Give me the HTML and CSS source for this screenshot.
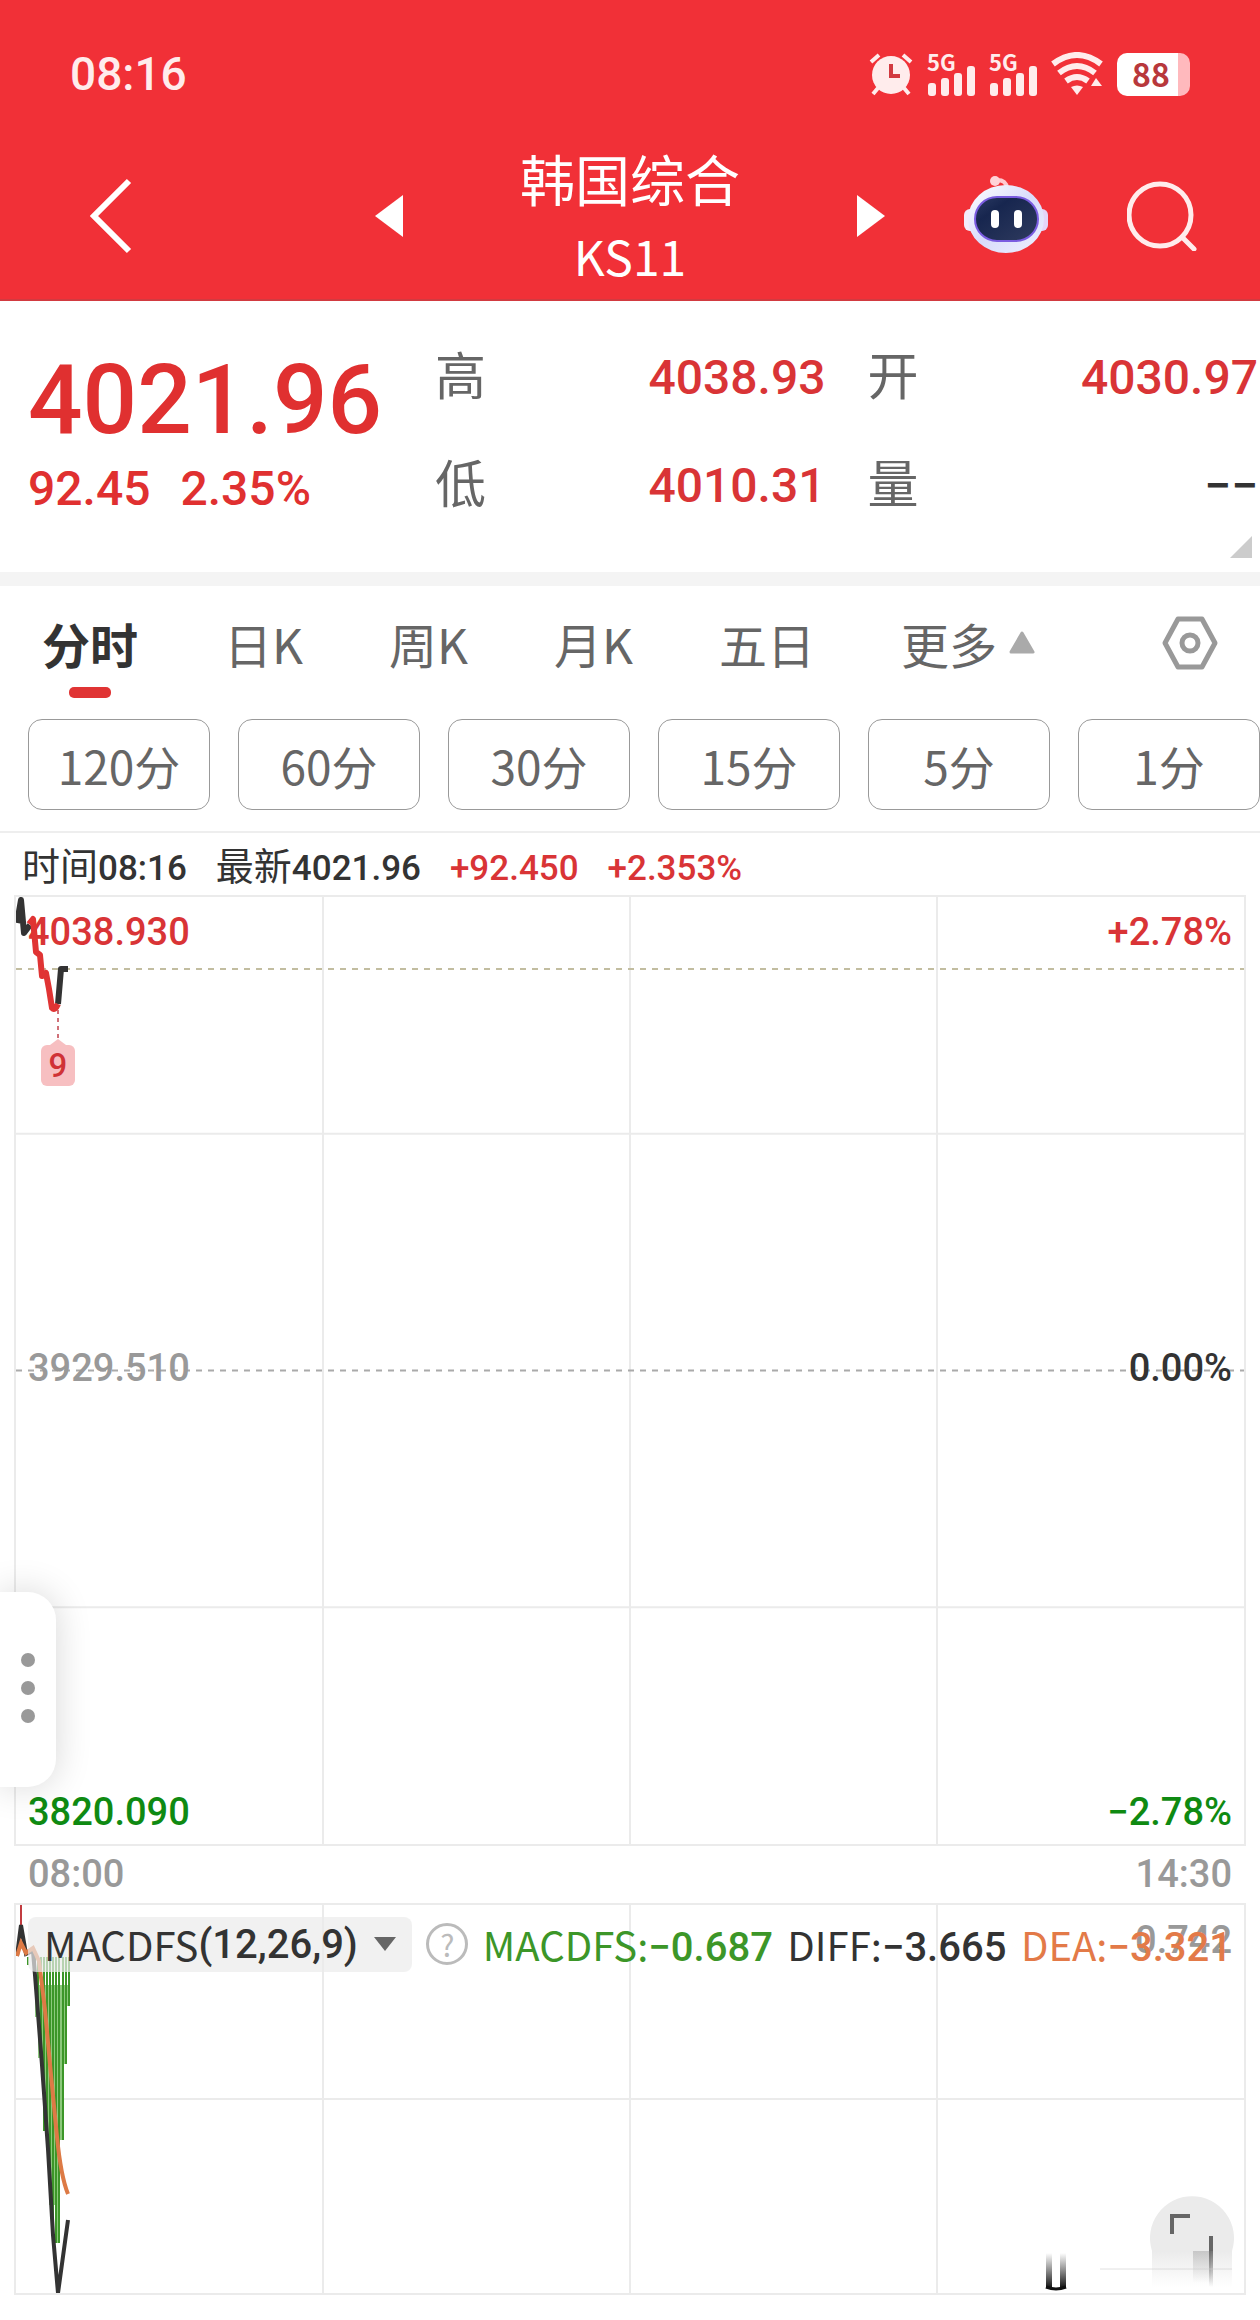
FILE: index.html
```
<!DOCTYPE html>
<html lang="zh-CN">
<head>
  <meta charset="UTF-8">
  <meta name="viewport" content="width=device-width, initial-scale=1.0">
  <title>韩国综合 KS11</title>
  <link rel="stylesheet" href="styles.css">
</head>
<body>

  <header class="top">
    <div class="status-bar">
      <span class="clock">08:16</span>
      <div class="status-icons">
        <svg class="alarm" width="44" height="44" viewBox="0 0 44 44">
          <circle cx="22" cy="23" r="19" fill="#ffecec"/>
          <path d="M2 10L10 3M42 10L34 3M9 36L4 42M35 36L40 42" stroke="#ffecec" stroke-width="4" fill="none"/>
          <path d="M22 12V24H31" stroke="#d23a40" stroke-width="4" fill="none"/>
        </svg>
        <div class="signal">
          <span>5G</span>
          <svg width="48" height="30" viewBox="0 0 48 30" fill="#ffecec">
            <rect x="1" y="17" width="8" height="13" rx="3"/>
            <rect x="14" y="12" width="8" height="18" rx="3"/>
            <rect x="27" y="7" width="8" height="23" rx="3"/>
            <rect x="40" y="0" width="8" height="30" rx="3"/>
          </svg>
        </div>
        <div class="signal">
          <span>5G</span>
          <svg width="48" height="30" viewBox="0 0 48 30" fill="#ffecec">
            <rect x="1" y="17" width="8" height="13" rx="3"/>
            <rect x="14" y="12" width="8" height="18" rx="3"/>
            <rect x="27" y="7" width="8" height="23" rx="3"/>
            <rect x="40" y="0" width="8" height="30" rx="3"/>
          </svg>
        </div>
        <svg class="wifi" width="52" height="44" viewBox="0 0 52 44">
          <g fill="none" stroke="#ffecec" stroke-width="6">
            <path d="M2 12Q26 -6 50 12"/>
            <path d="M8 21Q26 7 44 21"/>
            <path d="M15 29Q26 21 37 29"/>
          </g>
          <path d="M20 35Q26 32 32 35L26 43ZM40 34L45 26L51 34Z" fill="#ffecec"/>
        </svg>
        <span class="battery">88</span>
      </div>
    </div>

    <nav class="title-bar">
      <div class="nav-side nav-left">
        <button aria-label="返回">
          <svg width="42" height="76" viewBox="0 0 42 76"><path d="M39 3L4 38L39 73" fill="none" stroke="#fff" stroke-width="6"/></svg>
        </button>
        <button aria-label="上一个">
          <svg width="28" height="42" viewBox="0 0 28 42"><path d="M28 0V42L0 21Z" fill="#fff"/></svg>
        </button>
      </div>
      <div class="title">
        <h1>韩国综合</h1>
        <p>KS11</p>
      </div>
      <div class="nav-side nav-right">
        <button aria-label="下一个">
          <svg width="28" height="42" viewBox="0 0 28 42"><path d="M0 0V42L28 21Z" fill="#fff"/></svg>
        </button>
        <button aria-label="智能助手">
          <svg width="84" height="80" viewBox="0 0 84 80">
            <defs>
              <linearGradient id="shell" x1="0" y1="0" x2="1" y2="1">
                <stop offset="0" stop-color="#ffffff"/>
                <stop offset="0.5" stop-color="#d9dcfb"/>
                <stop offset="1" stop-color="#eef0ff"/>
              </linearGradient>
              <linearGradient id="visor" x1="0" y1="0" x2="1" y2="1">
                <stop offset="0" stop-color="#2b3a63"/>
                <stop offset="0.3" stop-color="#17264f"/>
                <stop offset="1" stop-color="#2f3b5e"/>
              </linearGradient>
            </defs>
            <path d="M31 4Q42 3 43 12" fill="none" stroke="#ffc9d0" stroke-width="4"/>
            <circle cx="31" cy="5" r="5" fill="#ffd3d8"/>
            <rect x="0" y="33" width="14" height="22" rx="6" fill="#f3ecfb"/>
            <rect x="70" y="33" width="14" height="22" rx="6" fill="#e5d5f8"/>
            <ellipse cx="42" cy="43" rx="38" ry="34" fill="url(#shell)"/>
            <rect x="11" y="21" width="63" height="44" rx="22" fill="url(#visor)" stroke="#7a5ce0" stroke-width="2"/>
            <rect x="27" y="34" width="8" height="18" rx="4" fill="#fff"/>
            <rect x="50" y="34" width="8" height="18" rx="4" fill="#fff"/>
          </svg>
        </button>
        <button aria-label="搜索">
          <svg width="70" height="70" viewBox="0 0 70 70" fill="none" stroke="#ffecec" stroke-width="5">
            <circle cx="33" cy="34" r="31"/>
            <path d="M55 56L67 68" stroke-linecap="round"/>
          </svg>
        </button>
      </div>
    </nav>
  </header>

  <section class="quote">
    <div class="price">
      <p class="last">4021.96</p>
      <p class="change"><span>92.45</span><span>2.35%</span></p>
    </div>
    <dl class="stats">
      <div><dt>高</dt><dd>4038.93</dd></div>
      <div><dt>低</dt><dd>4010.31</dd></div>
    </dl>
    <dl class="stats">
      <div><dt>开</dt><dd>4030.97</dd></div>
      <div><dt>量</dt><dd class="empty">−−</dd></div>
    </dl>
    <svg class="corner" width="22" height="22" viewBox="0 0 22 22"><path d="M22 0V22H0Z" fill="#ccc"/></svg>
  </section>

  <div class="tabs">
    <button class="tab active">分时</button>
    <button class="tab">日K</button>
    <button class="tab">周K</button>
    <button class="tab">月K</button>
    <button class="tab">五日</button>
    <button class="tab more">更多
      <svg width="26" height="23" viewBox="0 0 26 23"><path d="M13 2L24 21H2Z" fill="#aaa" stroke="#aaa" stroke-width="3" stroke-linejoin="round"/></svg>
    </button>
    <button class="settings" aria-label="设置">
      <svg width="56" height="54" viewBox="0 0 56 54" fill="none" stroke="#999" stroke-width="5">
        <path d="M16 3H40L53 27L40 51H16L3 27Z" stroke-linejoin="round"/>
        <circle cx="28" cy="27" r="8"/>
      </svg>
    </button>
  </div>

  <div class="periods">
    <button>120分</button>
    <button>60分</button>
    <button>30分</button>
    <button>15分</button>
    <button>5分</button>
    <button>1分</button>
  </div>

  <div class="info">
    <span>时间<b>08:16</b></span>
    <span>最新<b>4021.96</b></span>
    <span class="up"><b>+92.450</b></span>
    <span class="up"><b>+2.353%</b></span>
  </div>

  <main class="charts">
    <div class="chart price-chart">
      <svg class="canvas" width="100%" height="100%">
        <g stroke="#ebebeb" stroke-width="2">
          <line x1="0" y1="25%" x2="100%" y2="25%"/>
          <line x1="0" y1="75%" x2="100%" y2="75%"/>
          <line x1="25%" y1="0" x2="25%" y2="100%"/>
          <line x1="50%" y1="0" x2="50%" y2="100%"/>
          <line x1="75%" y1="0" x2="75%" y2="100%"/>
        </g>
        <line x1="0" y1="50%" x2="100%" y2="50%" stroke="#aaa" stroke-width="2" stroke-dasharray="6 6"/>
        <line x1="0" y1="72" x2="100%" y2="72" stroke="#c2bda0" stroke-width="2" stroke-dasharray="6 6"/>
        <path d="M42 113V142" stroke="#d07078" stroke-width="2" stroke-dasharray="4 4"/>
      </svg>
      <span class="label top-left up">4038.930</span>
      <span class="label top-right up">+2.78%</span>
      <span class="label mid-left muted">3929.510</span>
      <span class="label mid-right">0.00%</span>
      <span class="label bottom-left down">3820.090</span>
      <span class="label bottom-right down">−2.78%</span>
      <svg class="canvas" width="100%" height="100%" fill="none" stroke-width="6" stroke-linejoin="round">
        <path d="M1 26L5 3L8 36L14 28" stroke="#333"/>
        <path d="M42 107L45 72H52" stroke="#333"/>
        <path d="M13 27L17 22L20 55L24 58L26 79L30 76L33 92L36 111Q39 114 42 107" stroke="#e03434"/>
      </svg>
      <span class="marker">9</span>
    </div>

    <div class="times">
      <span>08:00</span>
      <span>14:30</span>
    </div>

    <div class="chart macd-chart">
      <svg class="canvas" width="100%" height="100%" fill="none">
        <g stroke="#ebebeb" stroke-width="2">
          <line x1="0" y1="50%" x2="100%" y2="50%"/>
          <line x1="25%" y1="0" x2="25%" y2="100%"/>
          <line x1="50%" y1="0" x2="50%" y2="100%"/>
          <line x1="75%" y1="0" x2="75%" y2="100%"/>
        </g>
        <path d="M19 52V80H53V101H50V159H47V235H44V338H40V300H33V244H30V226H27V153H22V112H19Z" fill="#8cc97c"/>
        <path d="M12 52V60M19 52V68M22 52V112M25 52V153M28 52V226M31 52V244M34 52V280M37 52V320M40 52V338M43 52V338M47 52V235M50 52V159M53 52V101" stroke="#3c9628" stroke-width="2"/>
        <path d="M5 0V20" stroke="#c23c40" stroke-width="2"/>
        <path d="M1 51L5 20L10 49L17 46L19 70L26 160L32 244L37 330L42 388L52 315" stroke="#333" stroke-width="4"/>
        <path d="M1 51L5 38L10 48L17 43L23 56L29 105L35 170L41 232Q45 272 52 289" stroke="#dd7a45" stroke-width="4"/>
      </svg>
      <div class="legend">
        <button class="indicator">MACDFS<b>(12,26,9)</b>
          <svg width="22" height="14" viewBox="0 0 22 14"><path d="M0 0H22L11 14Z" fill="#666"/></svg>
        </button>
        <button class="help" aria-label="帮助">?</button>
        <span class="green">MACDFS:<b>−0.687</b></span>
        <span>DIFF:<b>−3.665</b></span>
        <span class="orange">DEA:<b>−3.321</b></span>
      </div>
      <span class="label scale muted">0.742</span>
      <button class="fullscreen" aria-label="全屏">
        <svg width="228" height="100" viewBox="0 0 228 100" fill="none">
          <defs>
            <linearGradient id="fadeGrey" x1="0" y1="0" x2="0" y2="1">
              <stop offset="0" stop-color="#ebebeb"/>
              <stop offset="1" stop-color="#ffffff"/>
            </linearGradient>
            <linearGradient id="fadeDark" x1="0" y1="0" x2="0" y2="1">
              <stop offset="0" stop-color="#666" stop-opacity="0.9"/>
              <stop offset="1" stop-color="#666" stop-opacity="0"/>
            </linearGradient>
            <linearGradient id="fadeIn" x1="0" y1="0" x2="0" y2="1">
              <stop offset="0" stop-color="#222" stop-opacity="0"/>
              <stop offset="1" stop-color="#111"/>
            </linearGradient>
          </defs>
          <path d="M142 58A42 42 0 1 1 222 58Z" fill="#ebebeb"/>
          <rect x="142" y="58" width="80" height="36" fill="url(#fadeGrey)"/>
          <rect x="183" y="58" width="18" height="32" fill="url(#fadeDark)" opacity="0.3"/>
          <path d="M162 41V23H180" stroke="#666" stroke-width="4"/>
          <path d="M201 43V58" stroke="#666" stroke-width="4"/>
          <rect x="199" y="58" width="4" height="36" fill="url(#fadeDark)"/>
          <path d="M90 76H222" stroke="#ccc" opacity="0.6"/>
          <rect x="36" y="60" width="6" height="35" fill="url(#fadeIn)"/>
          <rect x="50" y="60" width="6" height="35" fill="url(#fadeIn)"/>
          <path d="M36 94Q46 98 56 94" stroke="#111" stroke-width="3"/>
        </svg>
      </button>
    </div>

    <button class="handle" aria-label="菜单"><i></i><i></i><i></i></button>
  </main>

</body>
</html>
```

FILE: styles.css
```
/* General */
* {
  box-sizing: border-box;
}

body {
  margin: 0;
  background-color: #fff;
  color: #333;
  font-family: 'Noto Sans CJK SC', sans-serif;
}

h1, p, dl, dd {
  margin: 0;
}

button {
  padding: 0;
  border: none;
  background: none;
  color: inherit;
  font-family: inherit;
  cursor: pointer;
}

svg {
  display: block;
}

b {
  font-family: Roboto, sans-serif;
  font-weight: 500;
}

.up {
  color: #d93436;
}

.down {
  color: #0f8a12;
}

.muted {
  color: #999;
}

/* Header */
.top {
  background-color: #f13037;
  color: #fff;
  border-bottom: 2px solid #d23a40;
}

.status-bar {
  display: flex;
  justify-content: space-between;
  align-items: center;
  height: 136px;
  padding: 12px 70px 0;
}

.clock {
  font-family: Roboto, sans-serif;
  font-size: 46px;
  font-weight: 500;
  color: #ffecec;
}

.status-icons {
  display: flex;
  align-items: center;
  gap: 14px;
}

.signal {
  display: flex;
  flex-direction: column;
  height: 44px;
}

.signal span {
  height: 14px;
  font-size: 22px;
  font-weight: 700;
  line-height: 18px;
  color: #ffecec;
}

.battery {
  width: 73px;
  height: 43px;
  padding-right: 5px;
  border-radius: 10px;
  background: linear-gradient(90deg, #fff 84%, #ffb9bd 84%);
  color: #b8383c;
  font-size: 32px;
  font-weight: 700;
  line-height: 41px;
  text-align: center;
}

.title-bar {
  display: grid;
  grid-template-columns: 1fr auto 1fr;
  align-items: center;
  height: 163px;
  padding-bottom: 4px;
}

.nav-side {
  display: flex;
  align-items: center;
  justify-content: space-between;
}

.nav-left {
  padding-left: 90px;
}

.nav-right {
  padding-right: 63px;
}

.title {
  padding: 0 117px;
  text-align: center;
}

.title h1 {
  font-size: 55px;
  font-weight: 400;
  line-height: 78px;
}

.title p {
  font-size: 48px;
  line-height: 78px;
}

/* Quote */
.quote {
  position: relative;
  display: grid;
  grid-template-columns: 365px 1fr 1fr;
  column-gap: 42px;
  height: 285px;
  padding: 22px 2px 0 28px;
  border-bottom: 14px solid #f4f4f4;
}

.price {
  padding-top: 20px;
  color: #e03030;
  font-family: Roboto, sans-serif;
  font-weight: 500;
}

.last {
  font-size: 96px;
  line-height: 114px;
}

.change {
  display: flex;
  gap: 30px;
  font-size: 48px;
  line-height: 64px;
}

.stats div {
  display: flex;
  justify-content: space-between;
  align-items: center;
  height: 108px;
}

.stats dt {
  padding-bottom: 8px;
  font-size: 51px;
  color: #666;
}

.stats dd {
  font-family: Roboto, sans-serif;
  font-size: 48px;
  font-weight: 500;
  color: #d93436;
}

.stats .empty {
  color: #333;
}

.corner {
  position: absolute;
  right: 8px;
  bottom: 14px;
}

/* Tabs */
.tabs {
  display: flex;
  align-items: center;
  gap: 86px;
  height: 133px;
  padding: 0 42px 20px;
}

.tab {
  position: relative;
  font-size: 48px;
  color: #666;
  white-space: nowrap;
}

.active {
  color: #333;
  font-weight: 700;
}

.active::after {
  content: '';
  position: absolute;
  left: 50%;
  bottom: -20px;
  width: 42px;
  height: 11px;
  margin-left: -21px;
  border-radius: 5px;
  background-color: #e03434;
}

.more {
  display: flex;
  align-items: center;
  gap: 12px;
}

.settings {
  margin-left: auto;
}

.periods {
  display: grid;
  grid-template-columns: repeat(6, 1fr);
  gap: 28px;
  padding: 0 0 21px 28px;
  border-bottom: 2px solid #eee;
}

.periods button {
  height: 91px;
  border: 1px solid #999;
  border-radius: 14px;
  color: #666;
  font-size: 46px;
}

/* Info line */
.info {
  display: flex;
  align-items: center;
  gap: 29px;
  height: 62px;
  padding: 0 22px 2px;
  font-size: 38px;
}

.info b {
  font-size: 35px;
}

/* Charts */
.charts {
  position: relative;
  padding: 0 14px 26px;
}

.chart {
  position: relative;
  border: 2px solid #ebebeb;
}

.price-chart {
  height: 951px;
}

.macd-chart {
  height: 392px;
}

.canvas {
  position: absolute;
  inset: 0;
}

.label {
  position: absolute;
  font-family: Roboto, sans-serif;
  font-size: 38px;
  font-weight: 500;
  line-height: 44px;
}

.top-left, .mid-left, .bottom-left {
  left: 12px;
}

.top-right, .mid-right, .bottom-right, .scale {
  right: 12px;
}

.top-left, .top-right {
  top: 13px;
}

.mid-left, .mid-right {
  top: 449px;
}

.bottom-left, .bottom-right {
  bottom: 10px;
}

.scale {
  top: 13px;
}

/* Nine-turn marker under the low point */
.marker {
  position: absolute;
  left: 25px;
  top: 148px;
  width: 34px;
  border-radius: 6px;
  background-color: #f7bfc1;
  color: #d03236;
  font-family: Roboto, sans-serif;
  font-size: 33px;
  font-weight: 500;
  line-height: 41px;
  text-align: center;
}

.marker::before {
  content: '';
  position: absolute;
  left: 9px;
  top: -6px;
  border: 8px solid transparent;
  border-top: none;
  border-bottom: 6px solid #f7bfc1;
}

.times {
  display: flex;
  justify-content: space-between;
  padding: 0 14px;
  color: #999;
  font-family: Roboto, sans-serif;
  font-size: 38px;
  font-weight: 500;
  line-height: 57px;
}

.legend {
  position: relative;
  display: flex;
  align-items: center;
  justify-content: space-between;
  height: 78px;
  padding: 0 12px;
  font-size: 40px;
  white-space: nowrap;
  z-index: 1;
}

.legend b {
  font-size: 40px;
}

.indicator {
  display: flex;
  align-items: center;
  height: 55px;
  padding: 0 16px;
  border-radius: 8px;
  background-color: rgba(235, 235, 235, 0.7);
  font-size: 40px;
}

.indicator svg {
  margin-left: 16px;
}

.help {
  width: 42px;
  height: 42px;
  border: 3px solid #bbb;
  border-radius: 50%;
  color: #bbb;
  font-size: 30px;
  line-height: 34px;
}

.green {
  color: #3c9628;
}

.orange {
  color: #e37a48;
}

.fullscreen {
  position: absolute;
  right: 6px;
  bottom: 0;
}

.handle {
  position: absolute;
  left: 0;
  top: 697px;
  display: flex;
  flex-direction: column;
  align-items: center;
  justify-content: center;
  gap: 14px;
  width: 56px;
  height: 195px;
  padding-bottom: 4px;
  border-radius: 0 28px 28px 0;
  background-color: #fff;
  box-shadow: 0 0 36px rgba(0, 0, 0, 0.16);
}

.handle i {
  width: 14px;
  height: 14px;
  border-radius: 50%;
  background-color: #999;
}
```
